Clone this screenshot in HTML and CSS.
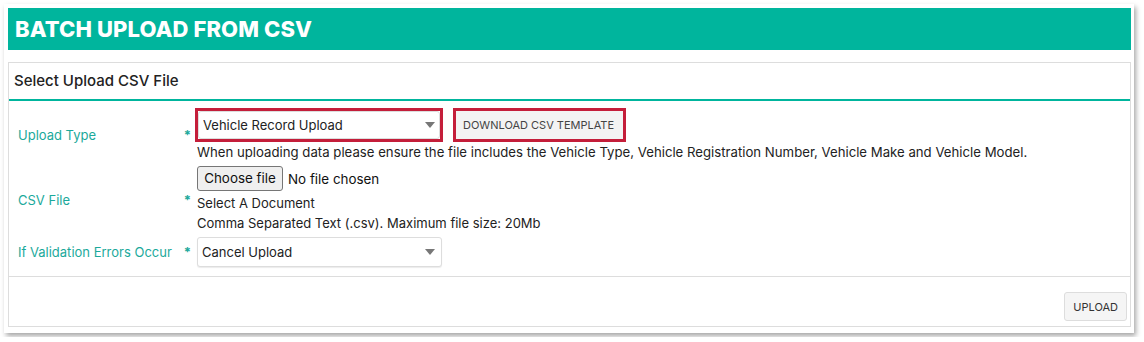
FILE: index.html
```html
<!DOCTYPE html>
<html lang="en">
<head>
<meta charset="UTF-8" />
<title>Batch Upload From CSV</title>
<link rel="stylesheet" href="styles.css">
</head>
<body>

<div class="frame">
  <h1 class="page-title">BATCH UPLOAD FROM CSV</h1>

  <div class="panel">
    <h2 class="panel-title">Select Upload CSV File</h2>

    <div class="form">
      <div class="label"><span>Upload Type</span><span class="req">*</span></div>
      <div class="control">
        <div class="inline">
          <div class="highlight select-wrap">
            <select class="select">
              <option>Vehicle Record Upload</option>
            </select>
            <span class="caret"></span>
          </div>
          <div class="highlight">
            <button class="btn-template">DOWNLOAD CSV TEMPLATE</button>
          </div>
        </div>
        <div class="hint">When uploading data please ensure the file includes the Vehicle Type, Vehicle Registration Number, Vehicle Make and Vehicle Model.</div>
      </div>

      <div class="label"><span>CSV File</span><span class="req">*</span></div>
      <div class="control">
        <label class="file">
          <input type="file" accept=".csv" />
          <span class="file-btn">Choose file</span>
          <span class="file-name">No file chosen</span>
        </label>
        <div class="hint">Select A Document</div>
        <div class="hint">Comma Separated Text (.csv). Maximum file size: 20Mb</div>
      </div>

      <div class="label"><span>If Validation Errors Occur</span><span class="req">*</span></div>
      <div class="control">
        <div class="select-wrap plain">
          <select class="select">
            <option>Cancel Upload</option>
          </select>
          <span class="caret"></span>
        </div>
      </div>
    </div>

    <div class="panel-footer">
      <button class="btn">UPLOAD</button>
    </div>
  </div>
</div>

</body>
</html>
```

FILE: styles.css
```css
/* base */
* {
  box-sizing: border-box;
}
body {
  margin: 0;
  background: #fff;
  font-family: 'Inter', 'Liberation Sans', sans-serif;
  font-size: 13px;
  color: #222;
}
.frame {
  margin: 4px;
  width: 1130px;
  height: 329px;
  padding: 4px 3px 5px 4px;
  background: #fff;
  box-shadow: 2px 3px 5px rgba(0,0,0,0.35);
}
.page-title {
  margin: 0;
  height: 42px;
  padding-left: 7px;
  background: #00b59d;
  color: #fff;
  font-size: 22px;
  font-weight: 800;
  line-height: 42px;
  letter-spacing: 0.1px;
}
.panel {
  margin-top: 12px;
  border: 1px solid #ddd;
}
.panel-title {
  margin: 0;
  height: 38px;
  padding-left: 5px;
  border-bottom: 2px solid #00b59d;
  font-size: 15px;
  font-weight: 500;
  line-height: 36px;
  color: #222;
}
.form {
  display: grid;
  grid-template-columns: 179px 1fr;
  row-gap: 4px;
  padding: 7px 9px 9px 9px;
  border-bottom: 1px solid #ddd;
}
.label {
  display: flex;
  justify-content: space-between;
  align-items: baseline;
  align-self: center;
  padding-right: 6px;
  color: #1ba99b;
  font-size: 13px;
}
.req {
  color: #1ba99b;
  font-weight: 700;
  font-size: 13px;
}
.control {
  display: flex;
  flex-direction: column;
  align-items: flex-start;
}
.inline {
  display: flex;
  gap: 10px;
  margin-left: -2px;
}
.highlight {
  border: 3px solid #c41e3a;
}
.select-wrap {
  position: relative;
  width: 248px;
}
.select-wrap.plain {
  width: 245px;
}
.select {
  appearance: none;
  width: 100%;
  height: 28px;
  padding: 0 20px 0 4px;
  border: 1px solid #ddd;
  border-radius: 3px;
  background: #fff;
  font-family: inherit;
  font-size: 13px;
  color: #222;
}
.select-wrap.plain .select {
  height: 30px;
  box-shadow: 0 1px 1px rgba(0,0,0,0.08);
}
.caret {
  position: absolute;
  right: 7px;
  top: 50%;
  margin-top: -3px;
  border-left: 5px solid transparent;
  border-right: 5px solid transparent;
  border-top: 6px solid #777;
  pointer-events: none;
}
.highlight .caret {
  right: 5px;
}
.btn-template {
  height: 28px;
  padding: 0 9px 0 7px;
  border: none;
  background: #f3f3f3;
  font-family: inherit;
  font-size: 11px;
  color: #444;
  cursor: pointer;
}
.hint {
  line-height: 20px;
  color: #222;
}
.control > .hint:first-of-type {
  margin-top: 2px;
}
.inline + .hint {
  font-size: 13.2px;
}
.file {
  display: flex;
  align-items: center;
  gap: 5px;
  cursor: pointer;
}
.file input {
  display: none;
}
.file-btn {
  height: 25px;
  width: 86px;
  border: 1px solid #767676;
  border-radius: 3px;
  background: #efefef;
  line-height: 23px;
  text-align: center;
  font-size: 13.4px;
  color: #111;
}
.file-name {
  font-size: 13.4px;
  color: #111;
}
.panel-footer {
  display: flex;
  justify-content: flex-end;
  padding: 15px 3px 5px 0;
}
.btn {
  height: 29px;
  padding: 0 8px;
  border: 1px solid #ddd;
  border-radius: 3px;
  background: #f5f5f5;
  font-family: inherit;
  font-size: 11px;
  color: #333;
  cursor: pointer;
}
```
